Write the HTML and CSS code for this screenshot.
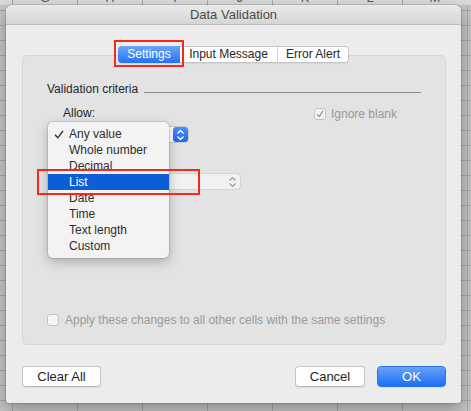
FILE: index.html
```html
<!DOCTYPE html>
<html>
<head>
<meta charset="utf-8">
<title>Data Validation</title>
<link rel="stylesheet" href="styles.css">
</head>
<body>
<div class="sheet-head">
  <div class="col"><span class="letter">G</span></div>
  <div class="col"><span class="letter">H</span></div>
  <div class="col"><span class="letter">I</span></div>
  <div class="col"><span class="letter">J</span></div>
  <div class="col"><span class="letter">K</span></div>
  <div class="col"><span class="letter">L</span></div>
  <div class="col"><span class="letter">M</span></div>
</div>

<div class="dialog">
  <div class="titlebar">Data Validation</div>
  <div class="tabs">
    <div class="seg">
      <span class="tab tab-settings active">Settings</span>
      <span class="tab tab-input">Input Message</span>
      <span class="tab tab-error">Error Alert</span>
    </div>
  </div>
  <div class="panel">
    <div class="legend"><span>Validation criteria</span><span class="rule"></span></div>
    <div class="criteria">
      <div class="left">
        <div class="label">Allow:</div>
        <div class="popup popup-allow">
          <span class="popup-text"></span>
          <span class="stepper stepper-blue">
            <svg width="9" height="12" viewBox="0 0 9 12"><path d="M1.5 4.5 L4.5 1.5 L7.5 4.5 M1.5 7.5 L4.5 10.5 L7.5 7.5" fill="none" stroke="#fff" stroke-width="1.3"/></svg>
          </span>
        </div>
        <div class="label label-data"></div>
        <div class="popup popup-data">
          <span class="popup-text"></span>
          <span class="stepper stepper-gray">
            <svg width="9" height="12" viewBox="0 0 9 12"><path d="M1.5 4.5 L4.5 1.5 L7.5 4.5 M1.5 7.5 L4.5 10.5 L7.5 7.5" fill="none" stroke="#9a9a9a" stroke-width="1.2"/></svg>
          </span>
        </div>
      </div>
      <div class="right">
        <div class="check check-ignore">
          <span class="box">
            <svg width="10" height="10" viewBox="0 0 10 10"><path d="M2 5.2 L4.2 7.6 L8 1.8" fill="none" stroke="#9c9c9c" stroke-width="1.4"/></svg>
          </span>
          <span class="check-text">Ignore blank</span>
        </div>
      </div>
    </div>
    <div class="check check-apply">
      <span class="box"></span>
      <span class="check-text">Apply these changes to all other cells with the same settings</span>
    </div>

    <ul class="menu">
      <li class="item checked"><svg class="tick" width="10" height="9" viewBox="0 0 10 9"><path d="M1 4.8 L3.8 7.8 L9 1" fill="none" stroke="#2a2a2a" stroke-width="1.3"/></svg>Any value</li>
      <li class="item">Whole number</li>
      <li class="item">Decimal</li>
      <li class="item hl">List</li>
      <li class="item">Date</li>
      <li class="item">Time</li>
      <li class="item">Text length</li>
      <li class="item">Custom</li>
    </ul>
  </div>
  <div class="footer">
    <button class="btn btn-clear">Clear All</button>
    <span class="spacer"></span>
    <button class="btn btn-cancel">Cancel</button>
    <button class="btn btn-ok">OK</button>
  </div>
</div>

<div class="mark mark-settings"></div>
<div class="mark mark-list"></div>
</body>
</html>
```

FILE: styles.css
```css
* { box-sizing: border-box; }
html, body { margin: 0; padding: 0; }
body {
  width: 471px;
  height: 411px;
  overflow: hidden;
  position: relative;
  font-family: "Liberation Sans", Arial, sans-serif;
  background-color: #c4c4c4;
  background-image:
    linear-gradient(#a6a6a6 1px, transparent 1px),
    linear-gradient(90deg, #a6a6a6 1px, transparent 1px);
  background-size: 100% 15px, 65px 100%;
  background-position: 0 10px, 12px 0;
}

.sheet-head {
  display: flex;
  height: 5px;
  overflow: hidden;
  padding-left: 12px;
  background: #dadada;
}
.col {
  flex: 0 0 65px;
  height: 5px;
  border-left: 1px solid #a6a6a6;
  text-align: center;
}
.letter {
  display: block;
  margin-top: -9px;
  font-size: 13px;
  line-height: 13px;
  color: #5a5a5a;
}

.dialog {
  position: absolute;
  left: 6px;
  top: 5px;
  width: 455px;
  height: 398px;
  background: #ececec;
  border-radius: 6px 6px 3px 3px;
  box-shadow: 0 0 0 1px rgba(0,0,0,0.12), 0 6px 16px rgba(0,0,0,0.3);
  display: flex;
  flex-direction: column;
}
.titlebar {
  flex: none;
  height: 20px;
  border-radius: 6px 6px 0 0;
  background: linear-gradient(#e9e9e9, #d6d6d6);
  border-bottom: 1px solid #bcbcbc;
  text-align: center;
  font-size: 13px;
  line-height: 20px;
  color: #4a4a4a;
}

.tabs {
  flex: none;
  display: flex;
  justify-content: center;
  margin-top: 21px;
  position: relative;
  z-index: 1;
}
.seg {
  display: flex;
  height: 17px;
  background: #fff;
  border: 1px solid #c4c4c4;
  border-radius: 4px;
  box-shadow: 0 1px 1px rgba(0,0,0,0.06);
  font-size: 12px;
  line-height: 15px;
  color: #262626;
}
.tab { display: block; text-align: center; }
.tab-settings {
  width: 62px;
  margin: -1px 0 -1px -1px;
  height: 17px;
  line-height: 17px;
  border-radius: 4px 0 0 4px;
  background: linear-gradient(#6aa6f9, #2473f3);
  color: #fff;
}
.tab-input { width: 97px; }
.tab-error { width: 71px; border-left: 1px solid #d2d2d2; }

.panel {
  flex: none;
  position: relative;
  margin: -8px 15px 0 16px;
  height: 290px;
  background: #e3e3e3;
  border: 1px solid #d6d6d6;
  border-radius: 5px;
  padding: 25px 24px 16px;
  display: flex;
  flex-direction: column;
  font-size: 12px;
  color: #262626;
}
.legend {
  display: flex;
  align-items: center;
  height: 16px;
  line-height: 16px;
}
.rule {
  flex: 1;
  height: 1px;
  margin: 6px 0 0 6px;
  background: #8a8a8a;
}

.criteria {
  display: flex;
  margin-top: 8px;
  padding-left: 16px;
}
.left { width: 251px; flex: none; }
.label { height: 16px; line-height: 16px; }
.label-data { margin-top: 6px; }
.popup {
  display: flex;
  height: 17px;
  margin-top: 5px;
  background: #fff;
  border: 1px solid #c9c9c9;
  border-radius: 4px;
}
.popup-allow { width: 126px; }
.popup-data {
  width: 178px;
  margin-top: 8px;
  background: #f1f1f1;
  border-color: #d4d4d4;
}
.popup-text { flex: 1; }
.stepper {
  flex: none;
  width: 15px;
  display: flex;
  align-items: center;
  justify-content: center;
}
.stepper-blue {
  background: linear-gradient(#4b91f7, #1b69ee);
  border-radius: 3px;
}

.check {
  display: flex;
  align-items: center;
  height: 16px;
  line-height: 16px;
  color: #999;
}
.check-ignore { margin-top: 1px; }
.check .box {
  width: 12px;
  height: 12px;
  margin-right: 6px;
  border: 1px solid #c4c4c4;
  border-radius: 3px;
  background: #f4f4f4;
  display: flex;
  align-items: center;
  justify-content: center;
}
.check-ignore .box { margin-right: 5px; }
.check-apply { margin-top: auto; }

.menu {
  position: absolute;
  left: 25px;
  top: 66px;
  width: 121px;
  margin: 0;
  padding: 4px 0;
  list-style: none;
  background: #f3f3f3;
  border-radius: 5px;
  box-shadow: 0 0 0 1px rgba(0,0,0,0.1), 0 4px 12px rgba(0,0,0,0.25);
  z-index: 2;
}
.item {
  position: relative;
  height: 16px;
  line-height: 16px;
  padding-left: 21px;
  color: #2e2e2e;
}
.item.hl { background: #0b5ed8; color: #fff; }
.tick { position: absolute; left: 6px; top: 4px; }

.footer {
  flex: none;
  display: flex;
  margin-top: 21px;
  padding: 0 15px 0 16px;
  gap: 12px;
}
.spacer { flex: 1; }
.btn {
  height: 21px;
  padding: 0;
  font-family: inherit;
  font-size: 13px;
  line-height: 19px;
  color: #1e1e1e;
  background: #fff;
  border: 1px solid #c6c6c6;
  border-bottom-color: #b8b8b8;
  border-radius: 4px;
  box-shadow: 0 1px 1px rgba(0,0,0,0.06);
}
.btn-clear { width: 79px; }
.btn-cancel { width: 70px; }
.btn-ok {
  width: 69px;
  color: #fff;
  background: linear-gradient(#66a3f9, #1a6ff4);
  border-color: #2d73ea;
}

.mark {
  position: absolute;
  border: 2px solid #f2291d;
  z-index: 5;
}
.mark-settings { left: 114px; top: 40px; width: 70px; height: 27px; }
.mark-list { left: 37px; top: 169px; width: 163px; height: 26px; }
```
